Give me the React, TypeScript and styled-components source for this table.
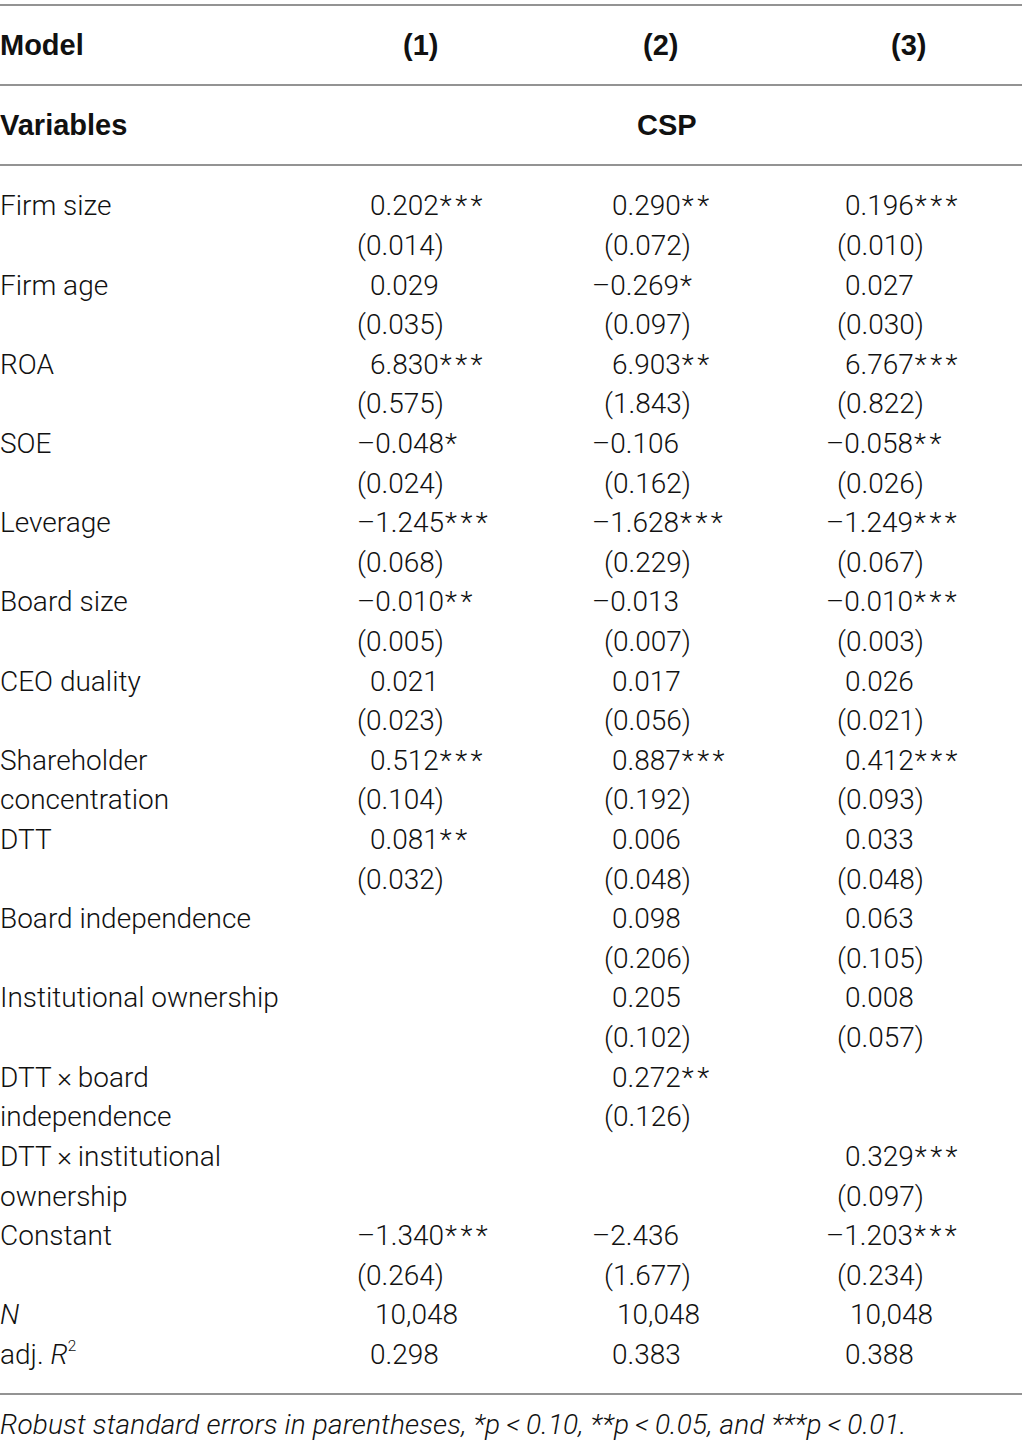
import React from "react";
import styled, { createGlobalStyle } from "styled-components";

const Global = createGlobalStyle`
  html, body { margin: 0; padding: 0; background: #fff; }
  body { font-family: Roboto, "Helvetica Neue", Arial, sans-serif; color: #111; }
`;

const Page = styled.div`
  width: 1022px;
  padding-top: 4px;
`;

const Rule = "2px solid #939393";

const HeadRow = styled.div<{ $top?: boolean }>`
  display: grid;
  grid-template-columns: 357px 235px 234px 1fr;
  align-items: center;
  height: 78px;
  border-top: ${(p) => (p.$top ? Rule : "none")};
  border-bottom: ${Rule};
  font-weight: 700;
  font-size: 29px;
  font-family: "Liberation Sans", Arial, sans-serif;
`;

const HeadCell = styled.div<{ $indent?: number }>`
  padding-left: ${(p) => p.$indent ?? 0}px;
  white-space: nowrap;
`;

const Body = styled.div`
  padding: 20px 0 19px;
  border-bottom: ${Rule};
`;

const Row = styled.div`
  display: grid;
  grid-template-columns: 357px 235px 234px 1fr;
  align-items: center;
  height: 39.62px;
  font-size: 28px;
  font-weight: 300;
  white-space: nowrap;
`;

const Label = styled.div`
  white-space: nowrap;
`;

const Num = styled.div<{ $indent: number }>`
  padding-left: ${(p) => p.$indent}px;
  white-space: nowrap;
`;

const Stars = styled.span`
  font-size: 1em;
  letter-spacing: 3.5px;
  margin-left: 1px;
`;

const Ital = styled.i`
  font-style: italic;
`;

const Sup = styled.sup`
  font-size: 0.55em;
  vertical-align: 0.85em;
  line-height: 0;
`;

const Footnote = styled.div`
  padding-top: 14px;
  font-size: 28px;
  font-weight: 300;
  font-style: italic;
  letter-spacing: 0.15px;
  line-height: 32px;
  white-space: nowrap;
`;

type Col = 0 | 1 | 2;
const offsets: Record<Col, { minus: number; paren: number; digit: number }> = {
  0: { minus: 0, paren: 0, digit: 13 },
  1: { minus: 0, paren: 12, digit: 20 },
  2: { minus: 0, paren: 11, digit: 19 },
};

function indentFor(v: string, c: Col): number {
  const o = offsets[c];
  if (v.startsWith("–")) return o.minus;
  if (v.startsWith("(")) return o.paren;
  if (v.startsWith("10,")) return o.digit + 5;
  return o.digit;
}

function Value({ v, c }: { v: string; c: Col }) {
  if (!v) return <Num $indent={0} />;
  const m = v.match(/^([^*]*)(\**)$/);
  const base = m ? m[1] : v;
  const st = m ? m[2] : "";
  return (
    <Num $indent={indentFor(v, c)}>
      {base}
      {st && <Stars>{st}</Stars>}
    </Num>
  );
}

type R = { label: React.ReactNode; vals: [string, string, string] };

const rows: R[] = [
  { label: "Firm size", vals: ["0.202***", "0.290**", "0.196***"] },
  { label: "", vals: ["(0.014)", "(0.072)", "(0.010)"] },
  { label: "Firm age", vals: ["0.029", "–0.269*", "0.027"] },
  { label: "", vals: ["(0.035)", "(0.097)", "(0.030)"] },
  { label: "ROA", vals: ["6.830***", "6.903**", "6.767***"] },
  { label: "", vals: ["(0.575)", "(1.843)", "(0.822)"] },
  { label: "SOE", vals: ["–0.048*", "–0.106", "–0.058**"] },
  { label: "", vals: ["(0.024)", "(0.162)", "(0.026)"] },
  { label: "Leverage", vals: ["–1.245***", "–1.628***", "–1.249***"] },
  { label: "", vals: ["(0.068)", "(0.229)", "(0.067)"] },
  { label: "Board size", vals: ["–0.010**", "–0.013", "–0.010***"] },
  { label: "", vals: ["(0.005)", "(0.007)", "(0.003)"] },
  { label: "CEO duality", vals: ["0.021", "0.017", "0.026"] },
  { label: "", vals: ["(0.023)", "(0.056)", "(0.021)"] },
  { label: "Shareholder", vals: ["0.512***", "0.887***", "0.412***"] },
  { label: "concentration", vals: ["(0.104)", "(0.192)", "(0.093)"] },
  { label: "DTT", vals: ["0.081**", "0.006", "0.033"] },
  { label: "", vals: ["(0.032)", "(0.048)", "(0.048)"] },
  { label: "Board independence", vals: ["", "0.098", "0.063"] },
  { label: "", vals: ["", "(0.206)", "(0.105)"] },
  { label: "Institutional ownership", vals: ["", "0.205", "0.008"] },
  { label: "", vals: ["", "(0.102)", "(0.057)"] },
  { label: "DTT\u2009×\u2009board", vals: ["", "0.272**", ""] },
  { label: "independence", vals: ["", "(0.126)", ""] },
  { label: "DTT\u2009×\u2009institutional", vals: ["", "", "0.329***"] },
  { label: "ownership", vals: ["", "", "(0.097)"] },
  { label: "Constant", vals: ["–1.340***", "–2.436", "–1.203***"] },
  { label: "", vals: ["(0.264)", "(1.677)", "(0.234)"] },
  { label: <Ital>N</Ital>, vals: ["10,048", "10,048", "10,048"] },
  {
    label: (
      <>
        adj. <Ital>R</Ital>
        <Sup>2</Sup>
      </>
    ),
    vals: ["0.298", "0.383", "0.388"],
  },
];

export default function App() {
  return (
    <Page>
      <Global />
      <HeadRow $top>
        <HeadCell>Model</HeadCell>
        <HeadCell $indent={46}>(1)</HeadCell>
        <HeadCell $indent={51}>(2)</HeadCell>
        <HeadCell $indent={65}>(3)</HeadCell>
      </HeadRow>
      <HeadRow>
        <HeadCell>Variables</HeadCell>
        <HeadCell />
        <HeadCell $indent={45}>CSP</HeadCell>
        <HeadCell />
      </HeadRow>
      <Body>
        {rows.map((r, i) => (
          <Row key={i}>
            <Label>{r.label}</Label>
            <Value v={r.vals[0]} c={0} />
            <Value v={r.vals[1]} c={1} />
            <Value v={r.vals[2]} c={2} />
          </Row>
        ))}
      </Body>
      <Footnote>
        Robust standard errors in parentheses, *p{"\u2009<\u2009"}0.10, **p{"\u2009<\u2009"}0.05, and ***p
        {"\u2009<\u2009"}0.01.
      </Footnote>
    </Page>
  );
}
